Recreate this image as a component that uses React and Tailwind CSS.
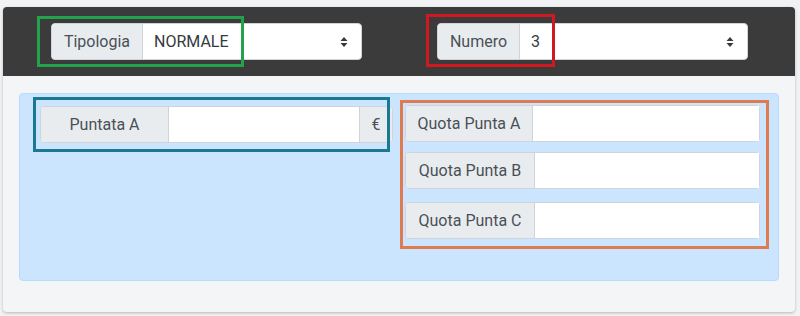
import { useState } from "react"

const font = { fontFamily: "Roboto, 'Liberation Sans', sans-serif" }

function Carets() {
    return (
        <svg width="8" height="12" viewBox="0 0 8 12" className="text-[#343a40]">
            <path d="M4 1 L7.5 5 H0.5 Z" fill="currentColor" />
            <path d="M4 11 L7.5 7 H0.5 Z" fill="currentColor" />
        </svg>
    )
}

function Mark({ className }) {
    return <div className={"pointer-events-none absolute border-[3px] " + className} />
}

function SelectGroup({ label, value, labelWidth }) {
    return (
        <div className="flex h-[37px] w-[311px] rounded-[4px] border border-[#ced4da] bg-white text-[16px] text-[#495057]">
            <div className={"flex items-center justify-center rounded-l-[4px] border-r border-[#ced4da] bg-[#e9ecef] " + labelWidth}>
                {label}
            </div>
            <div className="flex flex-1 items-center justify-between pl-[11px] pr-[13px] text-[#343a40]">
                <span>{value}</span>
                <Carets />
            </div>
        </div>
    )
}

function InputGroup({ label, labelWidth, suffix }) {
    const [val, setVal] = useState("")
    return (
        <div className="flex h-[37px] rounded-[4px] border border-[#ced4da] bg-white text-[16px] text-[#495057]">
            <div className={"flex items-center justify-center rounded-l-[4px] border-r border-[#ced4da] bg-[#e9ecef] " + labelWidth}>
                {label}
            </div>
            <input
                value={val}
                onChange={(e) => setVal(e.target.value)}
                className="min-w-0 flex-1 bg-white px-3 outline-none"
            />
            {suffix && (
                <div className="flex w-[33px] items-center justify-center rounded-r-[4px] border-l border-[#ced4da] bg-[#e9ecef]">
                    {suffix}
                </div>
            )}
        </div>
    )
}

export default function App() {
    return (
        <div className="h-[316px] w-[800px] bg-[#f1f2f4] px-[3px] pt-[7px]" style={font}>
            <div className="w-[792px] rounded-[4px] bg-[#f4f5f7] shadow-[0_1px_3px_rgba(0,0,0,0.25)]">
                <div className="flex h-[69px] items-center rounded-t-[4px] bg-[#3b3b3b]">
                    <div className="relative ml-[48px]">
                        <SelectGroup label="Tipologia" value="NORMALE" labelWidth="w-[91px]" />
                        <Mark className="-left-[14px] -top-[7px] h-[51px] w-[207px] border-[#22a24b]" />
                    </div>
                    <div className="relative ml-[75px]">
                        <SelectGroup label="Numero" value="3" labelWidth="w-[82px]" />
                        <Mark className="-left-[11px] -top-[9px] h-[53px] w-[129px] border-[#d01820]" />
                    </div>
                </div>

                <div className="px-[16px] pb-[31px] pt-[17px]">
                    <div className="flex h-[188px] items-start rounded-[4px] border border-[#b8daff] bg-[#cce5ff] pl-[20px] pt-[11px]">
                        <div className="relative mt-[1px] w-[353px]">
                            <InputGroup label="Puntata A" labelWidth="w-[128px]" suffix="€" />
                            <Mark className="-left-[7px] -top-[9px] h-[55px] w-[357px] border-[#1b7892]" />
                        </div>
                        <div className="relative ml-[12px] w-[355px]">
                            <InputGroup label="Quota Punta A" labelWidth="w-[127px]" />
                            <div className="mt-[10px]">
                                <InputGroup label="Quota Punta B" labelWidth="w-[129px]" />
                            </div>
                            <div className="mt-[13px]">
                                <InputGroup label="Quota Punta C" labelWidth="w-[129px]" />
                            </div>
                            <Mark className="-left-[5px] -top-[5px] h-[149px] w-[369px] border-[#e07a50]" />
                        </div>
                    </div>
                </div>
            </div>
        </div>
    )
}
